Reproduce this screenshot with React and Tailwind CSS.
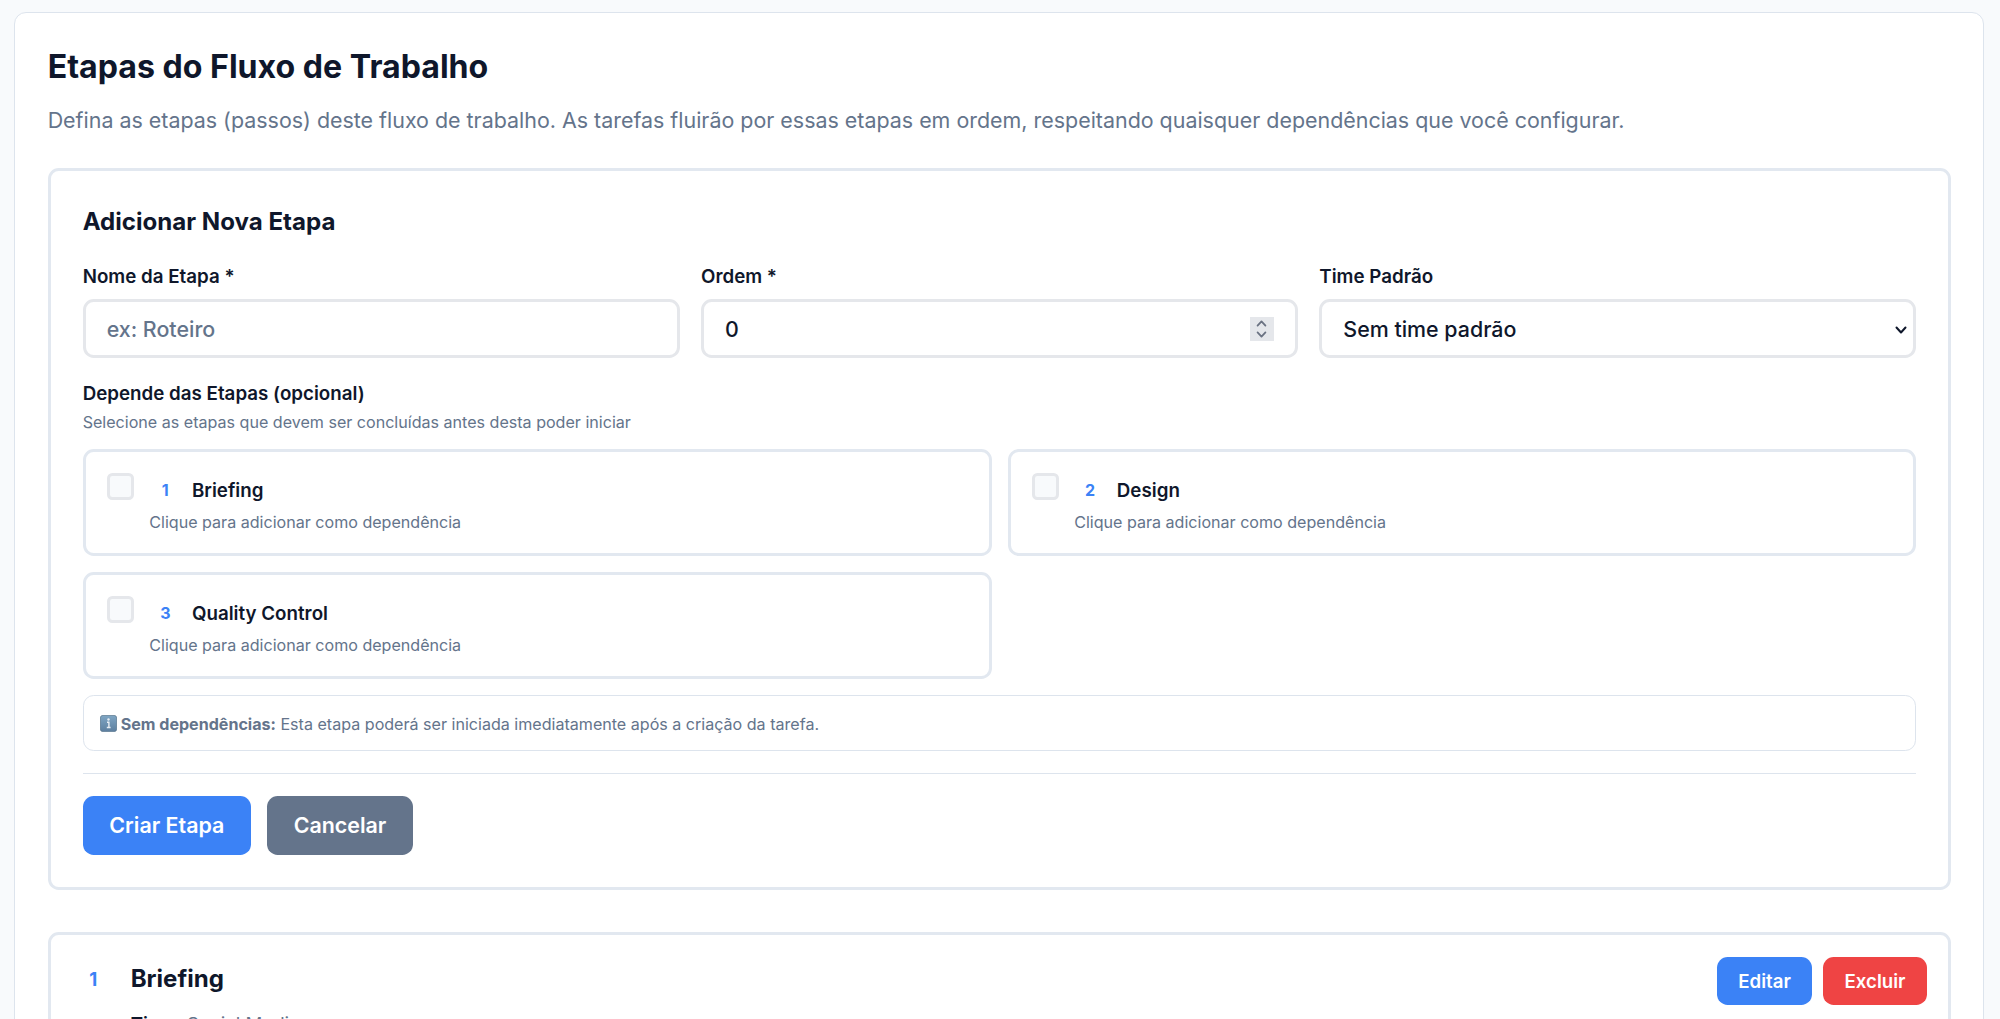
const label = "block text-[18.75px] leading-[26.67px] font-semibold text-slate-900";
const field =
  "mt-[8.67px] flex h-[59px] items-center rounded-[10.67px] border-[3px] border-[#e5e7eb] bg-white pl-[21px] text-[21.4px] font-medium text-slate-900";

function Chevron({ up, className }) {
  return (
    <svg className={className} viewBox="0 0 12 8" fill="none" stroke="currentColor" strokeWidth="2" strokeLinecap="round" strokeLinejoin="round">
      <path d={up ? "M1.5 6.5 6 1.5l4.500 5" : "M1.500 1.500 6 6.500l4.500-5"} />
    </svg>
  );
}

function Dependency({ n, name }) {
  return (
    <div className="flex h-[107px] rounded-[10.67px] border-[3px] border-slate-200 bg-white pt-[21px] pl-[21px]">
      <div className="h-[27px] w-[27px] shrink-0 rounded-[5.33px] border-[3px] border-[#e5e7eb] bg-slate-50" />
      <div className="ml-[15.67px] pt-[1.3px]">
        <div className="flex h-[32px] items-center">
          <span className="w-[32px] pb-[1.500px] text-center text-[16px] font-bold text-[#3b82f6]">{n}</span>
          <span className="ml-[10.67px] text-[18.75px] font-semibold text-slate-900">{name}</span>
        </div>
        <p className="mt-[5px] text-[16.08px] leading-[21.33px] text-[#64748b]">Clique para adicionar como dependência</p>
      </div>
    </div>
  );
}

function InfoIcon() {
  return (
    <svg className="mr-[4px] h-[17px] w-[17px] shrink-0" viewBox="0 0 17 17">
      <defs>
        <linearGradient id="infoTile" x1="0" y1="0" x2="0" y2="1">
          <stop offset="0" stopColor="#7fa6c4" />
          <stop offset="1" stopColor="#5d7f9f" />
        </linearGradient>
      </defs>
      <rect x="0.400" y="0.400" width="16.200" height="16.200" rx="2.500" fill="url(#infoTile)" stroke="#5b7890" strokeWidth="0.800" />
      <circle cx="8.500" cy="4.500" r="1.200" fill="#e8eef4" />
      <path d="M7 7.300h1.900v5M6.800 12.500h3.800" fill="none" stroke="#e8eef4" strokeWidth="1.400" />
    </svg>
  );
}

export default function App() {
  return (
    <div className="h-[1019px] overflow-hidden bg-slate-50 pt-[12px] pr-[16px] pl-[14px] font-['Inter',sans-serif]">
      <main className="h-[1100px] rounded-[12px] border border-[#dde4ed] bg-white pt-[33px] pr-[32px] pl-[32.67px]">
        <h1 className="text-[32.12px] leading-[42.67px] font-bold text-slate-900">Etapas do Fluxo de Trabalho</h1>
        <p className="mt-[15.33px] text-[21.43px] leading-[32px] text-[#64748b]">
          Defina as etapas (passos) deste fluxo de trabalho. As tarefas fluirão por essas etapas em ordem, respeitando quaisquer dependências que você configurar.
        </p>

        <section className="mt-[32px] h-[722px] rounded-[10.67px] border-[3px] border-slate-200 bg-white pt-[32px] pr-[31.67px] pl-[32px]">
          <h2 className="h-[37px] text-[24.1px] leading-[37px] font-bold text-slate-900">Adicionar Nova Etapa</h2>
          <div className="mt-[24px] grid grid-cols-3 gap-[21.33px]">
            <div>
              <span className={label}>Nome da Etapa *</span>
              <div className={field}>
                <span className="pt-[1px] text-[#64748b]">ex: Roteiro</span>
              </div>
            </div>
            <div>
              <span className={label}>Ordem *</span>
              <div className={field + " justify-between pr-[21.33px]"}>
                <span className="pt-[1px]">0</span>
                <span className="flex h-[24px] w-[24px] flex-col items-center justify-center gap-[4px] bg-gray-200 text-gray-500">
                  <Chevron up className="h-[7px] w-[11px]" />
                  <Chevron className="h-[7px] w-[11px]" />
                </span>
              </div>
            </div>
            <div>
              <span className={label}>Time Padrão</span>
              <div className={field + " justify-between pr-[6px]"}>
                <span className="pt-[1px]">Sem time padrão</span>
                <Chevron className="mt-[2px] h-[8px] w-[12px]" />
              </div>
            </div>
          </div>

          <span className={label + " mt-[23px]"}>Depende das Etapas (opcional)</span>
          <p className="mt-[4px] text-[16.08px] leading-[21.33px] text-[#64748b]">Selecione as etapas que devem ser concluídas antes desta poder iniciar</p>
          <div className="mt-[16px] grid grid-cols-2 gap-[16px]">
            <Dependency n="1" name="Briefing" />
            <Dependency n="2" name="Design" />
            <Dependency n="3" name="Quality Control" />
          </div>

          <div className="mt-[16px] flex h-[56px] items-center rounded-[10.67px] border border-[#dde4ed] bg-white pl-[16px] text-[16.08px] text-[#64748b]">
            <InfoIcon />
            <p className="pt-[1px]">
              <strong className="font-bold">Sem dependências:</strong> Esta etapa poderá ser iniciada imediatamente após a criação da tarefa.
            </p>
          </div>

          <div className="mt-[22px] flex gap-[16px] border-t border-[#dde4ed] pt-[22px]">
            <button className="h-[59px] w-[168.33px] rounded-[10.67px] bg-[#3b82f6] pb-[1.500px] text-[21.4px] font-semibold text-white">Criar Etapa</button>
            <button className="h-[59px] w-[146px] rounded-[10.67px] bg-[#64748b] pb-[1.500px] text-[21.4px] font-semibold text-white">Cancelar</button>
          </div>
        </section>

        <section className="mt-[42.33px] flex h-[220px] rounded-[10.67px] border-[3px] border-slate-200 bg-white pt-[21.67px] pr-[21px] pl-[21px]">
          <span className="h-[43px] w-[43px] text-center text-[18.67px] leading-[46px] font-bold text-[#3b82f6]">1</span>
          <div className="ml-[16px] grow">
            <h3 className="text-[24.06px] leading-[43px] font-bold text-slate-900">Briefing</h3>
            <p className="mt-[12.33px] text-[18.67px] leading-[26.67px] text-[#64748b]">
              <strong className="font-semibold text-slate-900">Time:</strong> Social Media
            </p>
          </div>
          <div className="flex gap-[10.67px]">
            <button className="h-[48px] w-[95.67px] rounded-[10.67px] bg-[#3b82f6] pt-[1.500px] text-[18.67px] font-semibold text-white">Editar</button>
            <button className="h-[48px] w-[104px] rounded-[10.67px] bg-[#ef4444] pt-[1.500px] text-[18.67px] font-semibold text-white">Excluir</button>
          </div>
        </section>
      </main>
    </div>
  );
}
